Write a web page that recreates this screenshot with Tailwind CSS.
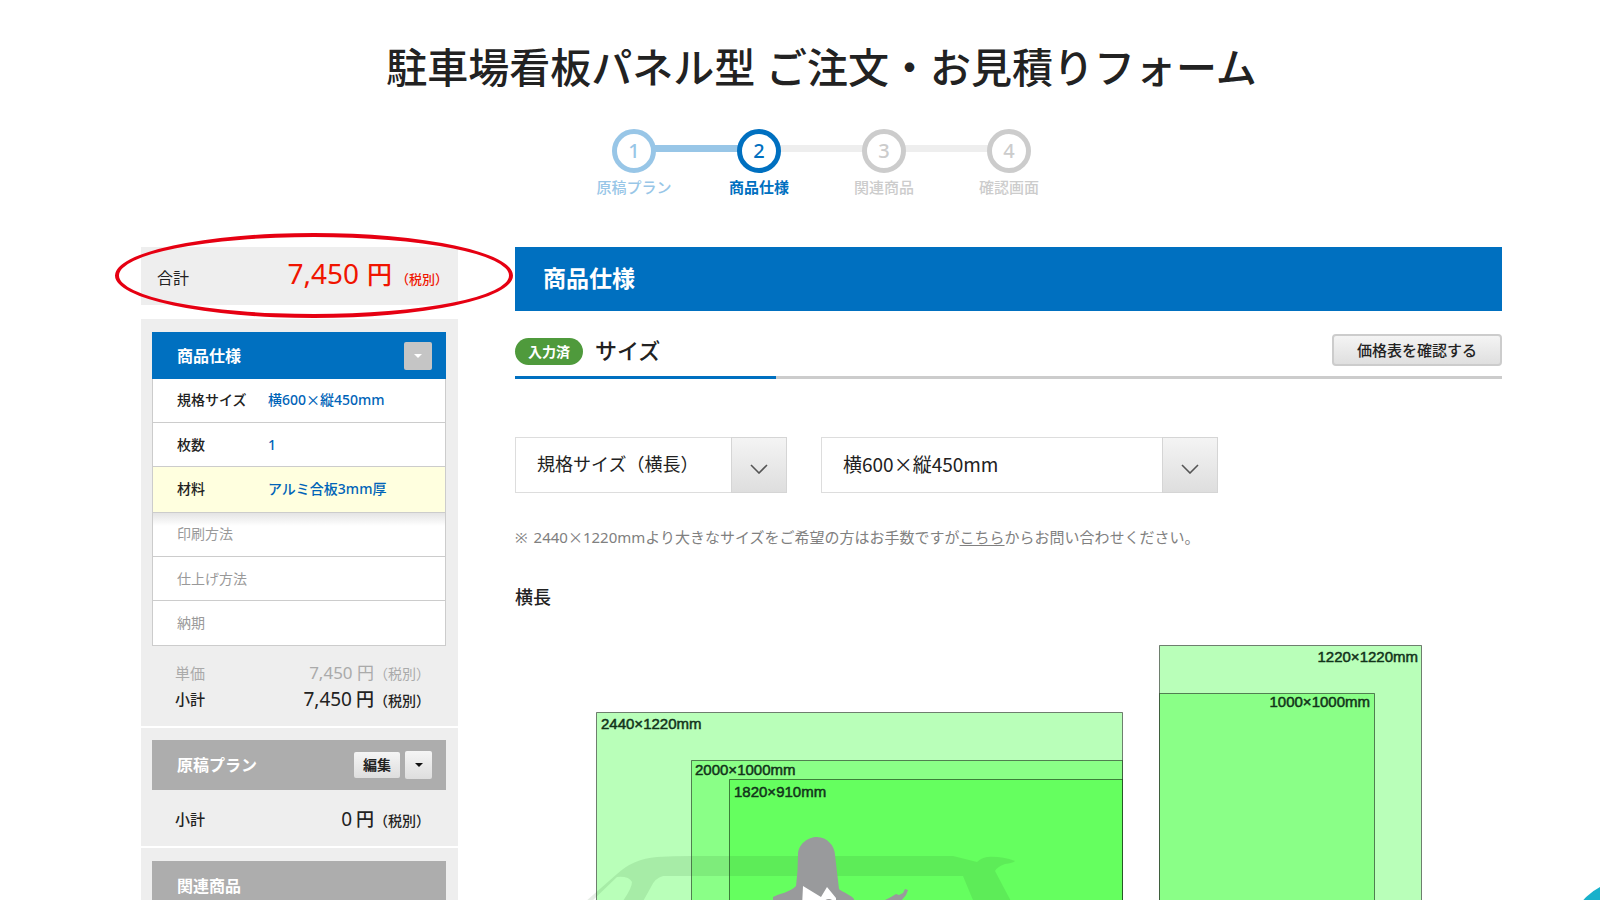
<!DOCTYPE html>
<html lang="ja">
<head>
<meta charset="utf-8">
<title>駐車場看板パネル型 ご注文・お見積りフォーム</title>
<script src="https://cdn.jsdelivr.net/npm/@tailwindcss/browser@4"></script>
</head>
<body class="h-screen overflow-hidden bg-white text-[#222] font-['Noto_Sans','Noto_Sans_CJK_JP',sans-serif]">
<div class="relative h-full overflow-hidden pl-[141px] pr-[98px] pt-10">
  <h1 class="text-center text-[41px] leading-[54px] font-medium whitespace-nowrap">駐車場看板パネル型 ご注文・お見積りフォーム</h1>

  <ol class="mt-[35px] flex justify-center text-[15px] leading-5 font-medium">
    <li class="relative flex w-[125px] flex-col items-center text-[#98c6e7]">
      <span class="absolute left-1/2 top-4 h-[7px] w-full bg-[#98c6e7]"></span>
      <span class="relative flex size-11 items-center justify-center rounded-full border-5 border-[#98c6e7] bg-white text-xl">1</span>
      <span class="mt-1">原稿プラン</span>
    </li>
    <li class="relative flex w-[125px] flex-col items-center text-[#0070c0]">
      <span class="absolute left-1/2 top-4 h-[7px] w-full bg-[#eee]"></span>
      <span class="relative flex size-11 items-center justify-center rounded-full border-5 border-[#0070c0] bg-white text-xl">2</span>
      <span class="mt-1 font-bold">商品仕様</span>
    </li>
    <li class="relative flex w-[125px] flex-col items-center text-[#ccc]">
      <span class="absolute left-1/2 top-4 h-[7px] w-full bg-[#eee]"></span>
      <span class="relative flex size-11 items-center justify-center rounded-full border-5 border-[#ccc] bg-white text-xl">3</span>
      <span class="mt-1">関連商品</span>
    </li>
    <li class="relative flex w-[125px] flex-col items-center text-[#ccc]">
      <span class="relative flex size-11 items-center justify-center rounded-full border-5 border-[#ccc] bg-white text-xl">4</span>
      <span class="mt-1">確認画面</span>
    </li>
  </ol>

  <div class="mt-[50px] flex gap-[57px]">
    <aside class="w-[317px] shrink-0">
      <div class="relative flex h-[58px] items-center justify-between bg-[#eee] pl-4 pr-[10px]">
        <span class="pt-1 text-base">合計</span>
        <span class="flex items-baseline whitespace-nowrap leading-10 text-[#f01400]"><span class="text-[28px]">7,450</span><span class="ml-2 text-[25px] font-medium">円</span><span class="ml-1 text-[13px] font-medium">（税別）</span></span>
        <span class="pointer-events-none absolute -bottom-[13px] -left-[26px] -right-[55px] -top-[14px] z-10 rounded-[50%] border-4 border-[#e60012]"></span>
      </div>

      <section class="mt-[14px] bg-[#eee] pb-[14px] pl-[11px] pr-3 pt-[13px]">
        <div class="flex h-[47px] items-center justify-between bg-[#0070c0] pl-[25px] pr-[14px]">
          <h2 class="text-base font-bold text-white">商品仕様</h2>
          <button type="button" aria-label="商品仕様を閉じる" class="flex size-7 items-center justify-center rounded-xs bg-[#c5c5c5]"><svg class="h-1 w-2" viewBox="0 0 8 4"><path d="M0 0h8L4 4z" fill="#fff"/></svg></button>
        </div>
        <dl class="border-x border-b border-[#ccc] bg-white text-sm leading-5">
          <div class="flex h-11 items-center border-b border-[#ccc] pb-[2px] pl-6"><dt class="w-[91px] font-medium">規格サイズ</dt><dd class="font-medium text-[#0064b8]">横600<span class="font-['Noto_Sans_CJK_JP']">×</span>縦450mm</dd></div>
          <div class="flex h-11 items-center border-b border-[#ccc] pl-6"><dt class="w-[91px] font-medium">枚数</dt><dd class="font-medium text-[#0064b8]">1</dd></div>
          <div class="flex h-[46px] items-center border-b border-[#ccc] bg-[#ffffdf] pb-[2px] pl-6"><dt class="w-[91px] font-medium">材料</dt><dd class="font-medium text-[#0064b8]">アルミ合板3mm厚</dd></div>
          <div class="flex h-11 items-center border-b border-[#ccc] bg-linear-to-b from-[#e4e4e4] to-white to-30% pb-[2px] pl-6 text-[#999]"><dt>印刷方法</dt></div>
          <div class="flex h-11 items-center border-b border-[#ccc] pl-6 text-[#999]"><dt>仕上げ方法</dt></div>
          <div class="flex h-11 items-center pl-6 text-[#999]"><dt>納期</dt></div>
        </dl>
        <dl class="mt-[14px] pl-[23px] pr-4 text-[15px]">
          <div class="flex h-[26px] items-center justify-between text-[#aaa]"><dt>単価</dt><dd class="flex items-baseline leading-6"><span class="text-[17px]">7,450 円</span><span class="text-sm">（税別）</span></dd></div>
          <div class="flex h-[26px] items-center justify-between font-medium"><dt>小計</dt><dd class="flex items-baseline leading-6"><span class="text-[19px] font-normal">7,450</span><span class="ml-1 text-lg">円</span><span class="text-sm">（税別）</span></dd></div>
        </dl>
      </section>

      <section class="mt-[2px] bg-[#eee] pb-[14px] pl-[11px] pr-3 pt-3">
        <div class="flex h-[50px] items-center justify-between bg-[#adadad] pl-[25px] pr-[14px]">
          <h2 class="text-base font-bold text-white">原稿プラン</h2>
          <div class="flex items-center gap-[5px]">
            <button type="button" class="h-[26px] w-[46px] rounded-xs bg-linear-to-b from-[#f5f5f5] to-[#dedede] text-sm leading-5 font-bold">編集</button>
            <button type="button" aria-label="原稿プランを開く" class="flex h-7 w-[27px] items-center justify-center rounded-xs bg-linear-to-b from-[#f5f5f5] to-[#dedede]"><svg class="h-1 w-2" viewBox="0 0 8 4"><path d="M0 0h8L4 4z" fill="#111"/></svg></button>
          </div>
        </div>
        <dl class="mt-4 pl-[23px] pr-4 text-[15px]">
          <div class="flex h-[26px] items-center justify-between font-medium"><dt>小計</dt><dd class="flex items-baseline leading-6"><span class="text-[19px] font-normal">0</span><span class="ml-1 text-lg">円</span><span class="text-sm">（税別）</span></dd></div>
        </dl>
      </section>

      <section class="mt-[2px] bg-[#eee] pb-[14px] pl-[11px] pr-3 pt-[13px]">
        <div class="flex h-[50px] items-center bg-[#adadad] pl-[25px]">
          <h2 class="text-base font-bold text-white">関連商品</h2>
        </div>
      </section>
    </aside>

    <main class="min-w-0 flex-1">
      <h2 class="flex h-16 items-center bg-[#0070c0] pb-[2px] pl-7 text-[23px] leading-8 font-bold text-white">商品仕様</h2>

      <div class="relative flex h-[68px] items-center justify-between border-b-3 border-[#ccc] pt-3">
        <div class="flex items-center gap-3">
          <span class="mt-1 flex h-[27px] w-[68px] items-center justify-center rounded-full bg-[#4f9a3c] text-sm leading-5 font-bold text-white">入力済</span>
          <h3 class="text-[22px] leading-7 font-medium">サイズ</h3>
        </div>
        <button type="button" class="h-8 w-[170px] rounded-sm border-2 border-[#ccc] bg-linear-to-b from-[#f4f4f4] to-[#dfdfdf] text-[15px] leading-5 font-medium">価格表を確認する</button>
        <span class="absolute -bottom-[3px] left-0 h-[3px] w-[261px] bg-[#0070c0]"></span>
      </div>

      <div class="mt-[58px] flex gap-[34px] text-lg">
        <div class="relative h-14 w-[272px]">
          <select aria-label="サイズの種類" class="size-full appearance-none border border-[#ddd] bg-white pb-[2px] pl-[21px]"><option>規格サイズ（横長）</option></select>
          <span class="pointer-events-none absolute inset-y-0 right-0 flex w-14 items-center justify-center border border-[#d5d5d5] bg-linear-to-b from-[#f4f4f4] to-[#dedede] pt-2"><svg class="h-[10px] w-[18px]" viewBox="0 0 18 10" fill="none" stroke="#555" stroke-width="1.6"><path d="M1 1l8 8 8-8"/></svg></span>
        </div>
        <div class="relative h-14 w-[397px]">
          <select aria-label="規格サイズ" class="size-full appearance-none border border-[#ddd] bg-white pb-[2px] pl-[21px] font-['Noto_Sans_CJK_JP',sans-serif] text-[19px]"><option>横600×縦450mm</option></select>
          <span class="pointer-events-none absolute inset-y-0 right-0 flex w-14 items-center justify-center border border-[#d5d5d5] bg-linear-to-b from-[#f4f4f4] to-[#dedede] pt-2"><svg class="h-[10px] w-[18px]" viewBox="0 0 18 10" fill="none" stroke="#555" stroke-width="1.6"><path d="M1 1l8 8 8-8"/></svg></span>
        </div>
      </div>

      <p class="mt-8 flex text-[15px] leading-6 whitespace-nowrap text-[#808080]"><span class="mr-[6px]">※</span><span>2440<span class="font-['Noto_Sans_CJK_JP']">×</span>1220mmより大きなサイズをご希望の方はお手数ですが<a href="#" class="underline underline-offset-2">こちら</a>からお問い合わせください。</span></p>

      <h4 class="mt-9 text-lg leading-6 font-medium">横長</h4>

      <!-- Panel size comparison; origin is the left edge of the column -->
      <svg class="mt-9 block w-full" viewBox="0 0 987 255" role="img" aria-label="サイズ比較図" font-family="Liberation Sans, sans-serif" font-size="15" fill="#12331a">
        <g stroke="#000" stroke-opacity=".5">
          <path d="M81.500 300V67.500H607.500V300z" fill="#b9ffb9"/>
          <path d="M176.500 300V115.500H607.500V300z" fill="#8aff87"/>
          <path d="M214.500 300V134.500H607.500V300z" fill="#65ff5f"/>
          <path d="M644.500 300V.5H906.500V300z" fill="#b9ffb9"/>
          <path d="M644.500 300V48.500H859.500V300z" fill="#8aff87"/>
        </g>
        <path d="M70 257L102 229Q118 214 142 212Q158 211 176 211H438L462 217Q466 213 472 212Q486 211 500 216Q498 218 490 219Q482 222 480 226L498 260H460L448 231H148Q140 233 136 242L126 260H105Q117 244 117 237Q114 231 102 232L76 257z" fill="#286428" fill-opacity=".12"/>
        <path d="M283 210C283 199 293 192 302 192C312 192 320 201 320 210L324 244C329 248 336 250 339 254V270H258V252C263 249 276 247 281 241Q283 226 283 210z" fill="#999a9c"/>
        <path d="M287 262L288 241L306 252L312 242L321 253V262z" fill="#fff"/>
        <path d="M308 262q0-8 6-8 5 0 6 8zM368 256l8-4 5-3 3 1 4-2 2-4 3 1-2 5-5 6z" fill="#999a9c"/>
        <g stroke="#12331a" stroke-width=".5">
          <text x="86" y="84">2440×1220mm</text>
          <text x="180" y="130">2000×1000mm</text>
          <text x="219" y="152">1820×910mm</text>
          <text x="903" y="17" text-anchor="end">1220×1220mm</text>
          <text x="855" y="62" text-anchor="end">1000×1000mm</text>
        </g>
      </svg>
    </main>
  </div>
  <a href="#" aria-label="ページの先頭へ" class="absolute -bottom-[91px] -right-20 size-[110px] rounded-full bg-[#18b1cb]"></a>
</div>
</body>
</html>
